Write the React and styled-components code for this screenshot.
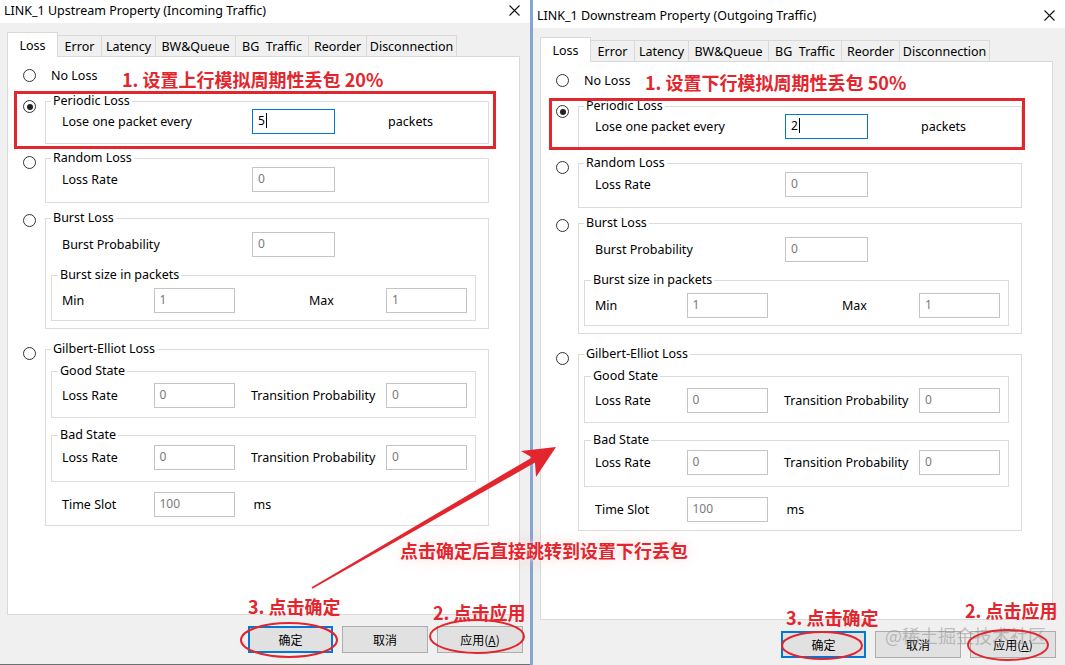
import React from "react";
import styled, { createGlobalStyle } from "styled-components";

const RED = "#e3262d";
const UI_FONT = `"Noto Sans", "Noto Sans CJK SC", sans-serif`;
const CJK_FONT = `"Noto Sans CJK SC", "Noto Sans", sans-serif`;

const GlobalStyle = createGlobalStyle`
  html, body { margin: 0; padding: 0; background: #f0f0f0; }
  body { font-family: ${UI_FONT}; font-size: 12.5px; color: #000; }
  * { box-sizing: border-box; }
`;

const Screen = styled.div`
  position: relative;
  width: 1065px;
  height: 665px;
  overflow: hidden;
  display: flex;
  background: #f0f0f0;
`;

const Window = styled.section`
  flex: none;
  width: ${p => p.$width}px;
  height: 665px;
  display: flex;
  flex-direction: column;
  background: #f0f0f0;
  border-left: ${p => (p.$front ? "3px solid #88a3d6" : "none")};
  border-bottom: ${p => (p.$front ? "none" : "1px solid #6f6f6f")};
`;

const TitleBar = styled.header`
  flex: none;
  height: ${p => p.$height}px;
  padding: ${p => p.$height - 23}px 0 3px 4px;
  background: #fff;
  display: flex;
  align-items: center;
  font-size: 12.5px;
  white-space: nowrap;
`;

const CloseButton = styled.span`
  margin-left: auto;
  width: 32px;
  display: flex;
  justify-content: center;
`;

const Body = styled.div`
  padding: 9px 0 0 7px;
`;

const TabStrip = styled.div`
  display: flex;
  align-items: flex-end;
  height: 25px;
  margin-bottom: -1px;
  position: relative;
  z-index: 1;
`;

const Tab = styled.div`
  width: ${p => p.$w}px;
  height: ${p => (p.$active ? 25 : 21)}px;
  margin-bottom: ${p => (p.$active ? 0 : 1)}px;
  margin-right: -1px;
  background: ${p => (p.$active ? "#fff" : "#f0f0f0")};
  border: 1px solid #d9d9d9;
  border-bottom: none;
  display: flex;
  align-items: center;
  justify-content: center;
  white-space: pre;
  position: relative;
  z-index: ${p => (p.$active ? 2 : 1)};
`;

const Panel = styled.div`
  width: 513px;
  height: 559px;
  background: #fff;
  border: 1px solid #d9d9d9;
  padding: 10px 0 0 15px;
  display: flex;
  flex-direction: column;
`;

const PlainOption = styled.div`
  display: flex;
  align-items: center;
  gap: 15px;
  height: 16px;
`;

const OptionRow = styled.div`
  display: grid;
  grid-template-columns: 13px 444px;
  column-gap: 9px;
  align-items: start;
  margin-top: ${p => p.$mt}px;
`;

const Radio = styled.span`
  width: 13px;
  height: 13px;
  border-radius: 50%;
  border: 1px solid #333;
  background: #fff;
  display: grid;
  place-items: center;
  margin-top: ${p => p.$top || 0}px;
  &::after {
    content: "";
    width: 6px;
    height: 6px;
    border-radius: 50%;
    background: ${p => (p.$checked ? "#222" : "transparent")};
  }
`;

const GroupBox = styled.fieldset`
  margin: ${p => p.$mt || 0}px 0 0 0;
  min-width: 0;
  border: 1px solid #dcdcdc;
  padding: ${p => p.$pt}px ${p => p.$pr || 0}px ${p => p.$pb}px ${p => p.$pl}px;
`;

const Caption = styled.legend`
  padding: 0 2px;
  margin: 0;
  line-height: 16px;
`;

const FieldRow = styled.div`
  display: grid;
  grid-template-columns: 190px 83px auto;
  align-items: center;
  padding-left: 11px;
  margin-top: ${p => p.$mt || 0}px;
`;

const PairRow = styled.div`
  display: grid;
  grid-template-columns: 91.5px 81px 151.5px 81px;
  align-items: center;
  padding-left: ${p => p.$pl}px;
  margin-top: ${p => p.$mt || 0}px;
`;

const Label = styled.span`
  padding-left: ${p => p.$indent || 0}px;
  white-space: nowrap;
`;

const TextBox = styled.div`
  height: 25px;
  border: 1px solid ${p => (p.$focused ? "#0078d7" : "#c4c4c4")};
  background: #fff;
  color: ${p => (p.$focused ? "#000" : "#7a7a7a")};
  display: flex;
  align-items: center;
  padding: 0 0 2px 5px;
  font-size: 12px;
`;

const Caret = styled.span`
  width: 1px;
  height: 15px;
  background: #000;
  margin-left: 1px;
`;

const ButtonRow = styled.div`
  display: flex;
  gap: 9px;
  padding-left: 241px;
  margin-top: 11px;
`;

const Button = styled.button`
  width: ${p => p.$w || 86}px;
  height: 27px;
  margin: 0;
  padding: 0;
  background: #e1e1e1;
  border: ${p => (p.$primary ? "2px solid #0078d7" : "1px solid #adadad")};
  font-family: ${CJK_FONT};
  font-size: 12px;
  color: #000;
`;

/* annotations drawn over the screenshot */
const Overlay = styled.div`
  position: absolute;
  inset: 0;
  pointer-events: none;
  z-index: 5;
`;

const Note = styled.div`
  position: absolute;
  left: ${p => p.$x}px;
  top: ${p => p.$y}px;
  font-family: ${CJK_FONT};
  font-weight: 700;
  font-size: 18px;
  line-height: 20px;
  color: ${RED};
  white-space: nowrap;
  text-shadow: ${p => (p.$glow ? "0 0 4px #fff, 0 0 12px rgba(255,170,170,0.55)" : "none")};
`;

const RedBox = styled.div`
  position: absolute;
  left: ${p => p.$x}px;
  top: ${p => p.$y}px;
  width: ${p => p.$w}px;
  height: ${p => p.$h}px;
  border: 3px solid ${RED};
`;

const Watermark = styled.div`
  position: absolute;
  left: 885px;
  top: 625px;
  font-family: ${CJK_FONT};
  font-size: 18px;
  line-height: 20px;
  color: rgba(140, 140, 140, 0.5);
  white-space: nowrap;
`;

const Marks = styled.svg`
  position: absolute;
  left: 0;
  top: 0;
`;

const TABS = [
  ["Loss", 51],
  ["Error", 45],
  ["Latency", 55],
  ["BW&Queue", 81],
  ["BG  Traffic", 74],
  ["Reorder", 59],
  ["Disconnection", 91]
];

const CloseIcon = () => (
  <svg width="11" height="11" viewBox="0 0 11 11">
    <path d="M0.5 0.5 L10.5 10.5 M10.5 0.5 L0.5 10.5" stroke="#111" strokeWidth="1.1" />
  </svg>
);

const Dialog = ({ title, titleHeight, width, front, value }) => (
  <Window $width={width} $front={front}>
    <TitleBar $height={titleHeight}>
      {title}
      <CloseButton>
        <CloseIcon />
      </CloseButton>
    </TitleBar>
    <Body>
      <TabStrip>
        {TABS.map(([name, w], i) => (
          <Tab key={name} $w={w} $active={i === 0}>
            {name}
          </Tab>
        ))}
      </TabStrip>
      <Panel>
        <PlainOption>
          <Radio />
          No Loss
        </PlainOption>

        <OptionRow $mt={10}>
          <Radio $checked $top={7} />
          <GroupBox $pt={0} $pb={9} $pl={5} $pr={12}>
            <Caption>Periodic Loss</Caption>
            <FieldRow>
              <Label>Lose one packet every</Label>
              <TextBox $focused>
                {value}
                <Caret />
              </TextBox>
              <Label $indent={53}>packets</Label>
            </FieldRow>
          </GroupBox>
        </OptionRow>

        <OptionRow $mt={6}>
          <Radio $top={6} />
          <GroupBox $pt={1} $pb={10} $pl={5} $pr={12}>
            <Caption>Random Loss</Caption>
            <FieldRow>
              <Label>Loss Rate</Label>
              <TextBox>0</TextBox>
            </FieldRow>
          </GroupBox>
        </OptionRow>

        <OptionRow $mt={7}>
          <Radio $top={4} />
          <GroupBox $pt={6} $pb={7} $pl={5} $pr={12}>
            <Caption>Burst Loss</Caption>
            <FieldRow>
              <Label>Burst Probability</Label>
              <TextBox>0</TextBox>
            </FieldRow>
            <GroupBox $mt={10} $pt={5} $pb={7} $pl={6}>
              <Caption>Burst size in packets</Caption>
              <PairRow $pl={4}>
                <Label>Min</Label>
                <TextBox>1</TextBox>
                <Label $indent={74.5}>Max</Label>
                <TextBox>1</TextBox>
              </PairRow>
            </GroupBox>
          </GroupBox>
        </OptionRow>

        <OptionRow $mt={12}>
          <Radio $top={6} />
          <GroupBox $pt={0} $pb={8} $pl={5} $pr={12}>
            <Caption>Gilbert-Elliot Loss</Caption>
            <GroupBox $mt={6} $pt={4} $pb={9} $pl={6}>
              <Caption>Good State</Caption>
              <PairRow $pl={4}>
                <Label>Loss Rate</Label>
                <TextBox>0</TextBox>
                <Label $indent={16.5}>Transition Probability</Label>
                <TextBox>0</TextBox>
              </PairRow>
            </GroupBox>
            <GroupBox $mt={9} $pt={2} $pb={11} $pl={6}>
              <Caption>Bad State</Caption>
              <PairRow $pl={4}>
                <Label>Loss Rate</Label>
                <TextBox>0</TextBox>
                <Label $indent={16.5}>Transition Probability</Label>
                <TextBox>0</TextBox>
              </PairRow>
            </GroupBox>
            <PairRow $pl={11} $mt={10}>
              <Label>Time Slot</Label>
              <TextBox>100</TextBox>
              <Label $indent={19}>ms</Label>
            </PairRow>
          </GroupBox>
        </OptionRow>
      </Panel>
      <ButtonRow>
        <Button $primary $w={85}>确定</Button>
        <Button>取消</Button>
        <Button>
          应用(<u>A</u>)
        </Button>
      </ButtonRow>
    </Body>
  </Window>
);

export default function App() {
  return (
    <>
      <GlobalStyle />
      <Screen>
        <Dialog
          title="LINK_1 Upstream Property (Incoming Traffic)"
          titleHeight={23}
          width={530}
          value="5"
        />
        <Dialog
          title="LINK_1 Downstream Property (Outgoing Traffic)"
          titleHeight={28}
          width={535}
          front
          value="2"
        />
        <Overlay>
          <RedBox $x={14} $y={91} $w={482} $h={58} />
          <RedBox $x={549} $y={98} $w={476} $h={52} />
          <Note $x={122} $y={69}>1. 设置上行模拟周期性丢包 20%</Note>
          <Note $x={645} $y={72}>1. 设置下行模拟周期性丢包 50%</Note>
          <Note $x={400} $y={540} $glow>点击确定后直接跳转到设置下行丢包</Note>
          <Note $x={248} $y={596}>3. 点击确定</Note>
          <Note $x={433} $y={602}>2. 点击应用</Note>
          <Note $x={786} $y={607}>3. 点击确定</Note>
          <Note $x={965} $y={600}>2. 点击应用</Note>
          <Watermark>@稀土掘金技术社区</Watermark>
          <Marks width="1065" height="665" viewBox="0 0 1065 665">
            <polygon
              points="311.6,587.3 532,457.4 521,451 556,447 536,477 535,462.6 312.4,588.7"
              fill={RED}
            />
            <g fill="none" stroke={RED} strokeWidth="2">
              <ellipse cx="289" cy="640" rx="48" ry="17" />
              <ellipse cx="477" cy="636.5" rx="47" ry="16.5" />
              <ellipse cx="822" cy="645.5" rx="40" ry="13.5" />
              <ellipse cx="1008" cy="645" rx="40" ry="15" />
            </g>
          </Marks>
        </Overlay>
      </Screen>
    </>
  );
}
